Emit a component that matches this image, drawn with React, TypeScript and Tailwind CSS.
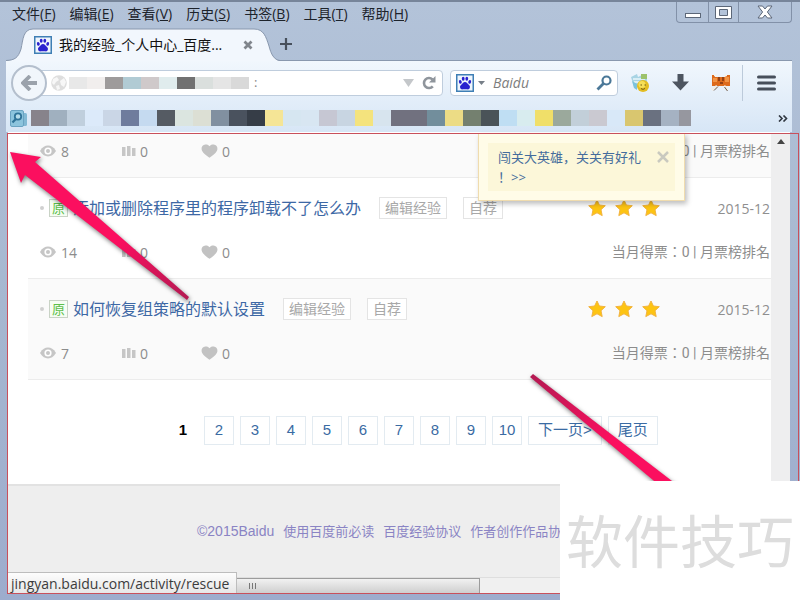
const menus = [
  ["文件", "F"],
  ["编辑", "E"],
  ["查看", "V"],
  ["历史", "S"],
  ["书签", "B"],
  ["工具", "T"],
  ["帮助", "H"],
];

const urlBlocks = [
  "bg-[#e8e8e8]",
  "bg-[#f1eeed]",
  "bg-[#9e9b9b]",
  "bg-[#b1cbd4]",
  "bg-[#cfc9ca]",
  "bg-[#e0eced]",
  "bg-[#717171]",
  "bg-[#dadfdd]",
  "bg-[#e5e5e5]",
  "bg-[#d9d9d9]",
];

const bookmarkBlocks = [
  "bg-[#87838b]",
  "bg-[#a0b0bf]",
  "bg-[#c0cfdd]",
  "bg-[#dceafa]",
  "bg-[#cad6e6]",
  "bg-[#6f7c9d]",
  "bg-[#c5daf0]",
  "bg-[#555b63]",
  "bg-[#dbe5e0]",
  "bg-[#dcdfd4]",
  "bg-[#8190a0]",
  "bg-[#4a525e]",
  "bg-[#363d47]",
  "bg-[#f5e596]",
  "bg-[#d6e6f1]",
  "bg-[#d8e6f2]",
  "bg-[#c6c7d3]",
  "bg-[#c8d5e2]",
  "bg-[#f4e37d]",
  "bg-[#d7e4ee]",
  "bg-[#71717f]",
  "bg-[#71717f]",
  "bg-[#728e9c]",
  "bg-[#ecdc85]",
  "bg-[#74806f]",
  "bg-[#4a5358]",
  "bg-[#bfdef3]",
  "bg-[#d8ecef]",
  "bg-[#f0df69]",
  "bg-[#9ba99c]",
  "bg-[#c2cfd9]",
  "bg-[#cac9d1]",
  "bg-[#d8e8f8]",
  "bg-[#d9c66f]",
  "bg-[#6a7180]",
  "bg-[#a5b2c2]",
  "bg-[#96979f]",
];

type Entry = {
  title?: string;
  views: number;
  shaded?: boolean;
};

const entries: Entry[] = [
  { views: 8, shaded: true },
  { title: "添加或删除程序里的程序卸载不了怎么办", views: 14 },
  { title: "如何恢复组策略的默认设置", views: 7, shaded: true },
];

const PawIcon = () => (
  <svg viewBox="0 0 18 18" className="size-[18px] shrink-0">
    <rect x="0.75" y="0.75" width="16.5" height="16.5" fill="#eef5fc" stroke="#3f7fb5" strokeWidth="1.5" />
    <g fill="#2a22cf">
      <ellipse cx="4.3" cy="7.8" rx="1.4" ry="1.9" transform="rotate(-15 4.3 7.8)" />
      <ellipse cx="7.2" cy="4.8" rx="1.4" ry="2" />
      <ellipse cx="10.8" cy="4.8" rx="1.4" ry="2" />
      <ellipse cx="13.7" cy="7.8" rx="1.4" ry="1.9" transform="rotate(15 13.7 7.8)" />
      <path d="M9 8c1.6 0 2.2 1.4 3.2 2.3 1.2 1 2 1.8 1.7 3.3-.3 1.6-1.6 2-3 1.7-1.3-.2-2.5-.2-3.8 0-1.4.3-2.7-.1-3-1.7-.3-1.5.5-2.3 1.7-3.3C6.8 9.4 7.4 8 9 8z" />
    </g>
  </svg>
);

const EyeIcon = () => (
  <svg viewBox="0 0 16 12" className="h-3 w-4">
    <path d="M0 6C2.5 2 5 .6 8 .6S13.5 2 16 6c-2.5 4-5 5.4-8 5.4S2.5 10 0 6z" fill="#c6c6c6" />
    <circle cx="8" cy="6" r="3.6" fill="#fff" />
    <circle cx="8" cy="6" r="2" fill="#c6c6c6" />
  </svg>
);

const BarsIcon = () => (
  <svg viewBox="0 0 14 10" className="h-[10px] w-[14px]">
    <path d="M0 1h3.5v9H0zM5 0h3.5v10H5zM10 2h3.5v8H10z" fill="#c6c6c6" />
  </svg>
);

const HeartIcon = () => (
  <svg viewBox="0 0 17 14" className="h-[14px] w-[17px]">
    <path
      d="M8.5 2.2C9.6.7 11 .3 12.6.5c2.6.3 4.2 2.4 3.8 4.8-.5 3.2-4.2 6-7.9 8.500C4.800 11.300 1.100 8.500.6 5.300.2 2.900 1.800.8 4.400.5 6 .3 7.400.7 8.500 2.200z"
      fill="#c2c2c2"
    />
  </svg>
);

const StarIcon = () => (
  <svg viewBox="0 0 18 18" className="size-[18px]">
    <path
      d="M9 1l2.400 5 5.900.7-4.300 4 1.200 5.900L9 13.800l-5.200 2.800 1.200-5.900-4.300-4L6.600 6z"
      fill="#fdc412"
      stroke="#f2b340"
      strokeWidth="1"
      strokeLinejoin="round"
    />
  </svg>
);

function TitleBar() {
  return (
    <header className="flex h-[25px] justify-between">
      <nav className="flex items-center gap-[14px] pb-[2px] pl-3 text-[14px] leading-none text-[#1d232b]">
        {menus.map(([label, key]) => (
          <button key={key} className="whitespace-nowrap">
            {label}(<u>{key}</u>)
          </button>
        ))}
      </nav>
      <div className="mr-2 flex h-[21px] shrink-0 divide-x divide-[#8291a8] rounded-b border border-t-0 border-[#8291a8]">
        <button aria-label="最小化" className="flex w-8 items-end justify-center pb-1">
          <svg viewBox="0 0 16 5" className="h-[5px] w-4">
            <rect x="0.5" y="0.5" width="15" height="4" fill="#fff" stroke="#5c6778" />
          </svg>
        </button>
        <button aria-label="最大化" className="flex w-[30px] items-center justify-center">
          <svg viewBox="0 0 17 13" className="h-[13px] w-[17px]">
            <path
              d="M.5.5h16v12H.5zM4.500 3.500v6h8v-6z"
              fill="#fff"
              fillRule="evenodd"
              stroke="#5c6778"
            />
          </svg>
        </button>
        <button aria-label="关闭" className="flex w-[52px] items-center justify-center">
          <svg viewBox="0 0 16 14" className="h-[14px] w-4">
            <path
              d="M1 1h4.500L8 4l2.500-3H15l-4.600 6L15 13h-4.500L8 10l-2.500 3H1l4.600-6z"
              fill="#fff"
              stroke="#5c6778"
            />
          </svg>
        </button>
      </div>
    </header>
  );
}

function TabStrip() {
  return (
    <div className="relative z-10 flex h-[33px] pl-[6px]">
      <div className="relative w-[274px] shrink-0">
        {/* One pixel taller than the strip, so the active tab runs into the toolbar */}
        <svg viewBox="0 0 274 34" className="absolute inset-x-0 top-0 h-[34px] w-full">
          <path
            d="M0 34C9 33 12 31 15 22C17 13 17 2 27 2H248C258 2 260 10 263 19C265 27 268 33 274 34z"
            fill="#f2f7fd"
          />
          <path
            d="M0 33.500C9 33 12 31 15 22C17 13 17 2 27 2H248C258 2 260 10 263 19C265 27 268 33 274 33.500"
            fill="none"
            stroke="#8998ae"
          />
        </svg>
        <div className="relative flex h-full items-center pl-7 pt-[2px]">
          <PawIcon />
          <span className="ml-[7px] flex-1 whitespace-nowrap text-[14px] text-[#111]">
            我的经验_个人中心_百度...
          </span>
          <button aria-label="关闭标签页" className="mr-[27px]">
            <svg viewBox="0 0 10 10" className="size-[10px]">
              <path d="M1.500 1.500l7 7M8.500 1.500l-7 7" stroke="#80858c" strokeWidth="2.800" />
            </svg>
          </button>
        </div>
      </div>
      <button aria-label="新建标签页" className="flex items-center">
        <svg viewBox="0 0 12 12" className="size-3">
          <path d="M6 0v12M0 6h12" stroke="#47505c" strokeWidth="2.200" />
        </svg>
      </button>
    </div>
  );
}

function NavBar() {
  return (
    <div className="flex h-[43px] items-center pl-[5px]">
      <button
        aria-label="后退"
        className="z-10 flex size-9 shrink-0 items-center justify-center rounded-full border-2 border-[#b4bfcd] bg-[#f1f6fb]"
      >
        <svg viewBox="0 0 16 16" className="size-4">
          <path d="M9 1L2 8l7 7M2.500 8H16" fill="none" stroke="#9ba2ab" strokeWidth="3.800" />
        </svg>
      </button>
      <div className="-ml-2 flex h-[26px] min-w-0 flex-1 items-center rounded-r-sm border border-[#bfcddd] bg-white pl-[11px] pr-[6px]">
        <svg viewBox="0 0 16 16" className="size-4 shrink-0">
          <circle cx="8" cy="8" r="7.800" fill="#dedede" />
          <path d="M2 4l4-2 2 3-3 2-2 3-2-2zM9 6l4-3 2 4-2 5-3-2zM5 11l3-1 1 4-3 1z" fill="#f7f7f7" />
        </svg>
        <div className="ml-[2px] flex shrink-0">
          {urlBlocks.map((color, i) => (
            <span key={i} className={`h-3 w-[18px] ${color}`} />
          ))}
        </div>
        <input
          aria-label="网址"
          defaultValue=":"
          className="ml-[5px] min-w-0 flex-1 bg-transparent text-[13px] text-[#888] outline-none"
        />
        <button aria-label="历史记录" className="shrink-0">
          <svg viewBox="0 0 11 8" className="h-2 w-[11px]">
            <path d="M0 0h11L5.500 8z" fill="#c4c7ca" />
          </svg>
        </button>
        <button aria-label="刷新" className="ml-2 shrink-0">
          <svg viewBox="0 0 14 14" className="size-[14px]">
            <path d="M10.800 10.300A5 5 0 1 1 10.500 3.500" fill="none" stroke="#8f959c" strokeWidth="2.600" />
            <path d="M13.500 0v6.500H7z" fill="#8f959c" />
          </svg>
        </button>
      </div>
      <div className="ml-[7px] flex h-[26px] w-[168px] shrink-0 items-center rounded-sm border border-[#bfcddd] bg-white px-[5px]">
        <PawIcon />
        <svg viewBox="0 0 7 4" className="ml-1 h-1 w-[7px] shrink-0">
          <path d="M0 0h7L3.500 4z" fill="#777f88" />
        </svg>
        <input
          aria-label="搜索"
          placeholder="Baidu"
          className="ml-2 min-w-0 flex-1 bg-transparent text-[14px] italic outline-none placeholder:text-[#7d7d7d]"
        />
        <button aria-label="搜索" className="shrink-0">
          <svg viewBox="0 0 16 16" className="size-4">
            <circle cx="10.500" cy="5.500" r="4" fill="none" stroke="#4b7898" strokeWidth="2.200" />
            <path d="M7.500 8.500L1.500 14.500" stroke="#4b7898" strokeWidth="2.800" />
          </svg>
        </button>
      </div>
      <button aria-label="扩展" className="ml-3 shrink-0">
        <svg viewBox="0 0 20 20" className="size-5">
          <path d="M1 4l6-3 1 3 6-3 3 1v12H4z" fill="#a8d4e4" />
          <path d="M3 6h12M4 9h8" stroke="#e9f6fa" strokeWidth="1.500" />
          <path d="M11 1h6v5h-6z" fill="#9cc26b" />
          <path d="M2 8l5 3v6l-3-2z" fill="#7cc3dc" />
          <circle cx="13" cy="13" r="6" fill="#e3bd22" />
          <circle cx="12" cy="11.500" r="3.500" fill="#f6df57" />
          <path d="M10.500 12h1.500M14.500 12H16M11 15.500c1.500 1.200 3 1 4-.3" stroke="#6f5a12" fill="none" />
        </svg>
      </button>
      <button aria-label="下载" className="ml-[22px] shrink-0">
        <svg viewBox="0 0 17 17" className="size-[17px]">
          <path d="M5.500 0h6v7.500H17L8.500 16.500 0 7.500h5.500z" fill="#4d5560" />
        </svg>
      </button>
      <button aria-label="助手" className="ml-[22px] shrink-0">
        <svg viewBox="0 0 20 18" className="h-[18px] w-5">
          <path d="M1 1h3v2h10l2-2h3v11H1z" fill="#dd6a1b" />
          <path d="M2 4h4v4H2zM14 3h4v5h-4z" fill="#f29445" />
          <path d="M8 3v4M12 3v4M9 9h3" stroke="#7d3410" strokeWidth="1.500" />
          <path d="M3 1.500h3M13 1.500h3" stroke="#f7f2ea" strokeWidth="1.500" />
          <path d="M6 12l-5 4M13 12l4 4" stroke="#f3efe6" strokeWidth="2.500" fill="none" />
          <path d="M3 16.500l4-4M13.500 13l3 4" stroke="#6b5a4e" strokeWidth="1" />
        </svg>
      </button>
      <div className="ml-[11px] h-9 w-px shrink-0 bg-[#bccada]" />
      <button aria-label="菜单" className="ml-[14px] mr-4 shrink-0">
        <svg viewBox="0 0 19 16" className="h-4 w-[19px]">
          <path d="M1.500 2h16M1.500 8h16M1.500 14h16" stroke="#474f5b" strokeWidth="3" strokeLinecap="round" />
        </svg>
      </button>
    </div>
  );
}

function BookmarksBar() {
  return (
    <div className="flex h-7 items-center pl-1 pr-1">
      <svg viewBox="0 0 17 17" className="size-[17px] shrink-0">
        <rect x="5" y="3" width="12" height="13" rx="1.500" fill="#82b9d4" />
        <rect x="0.500" y="0.500" width="13" height="16" rx="1.500" fill="#8cc4dd" stroke="#6aa3c2" />
        <circle cx="8" cy="6.500" r="3.200" fill="#b5dcea" stroke="#2f7398" strokeWidth="1.800" />
        <path d="M5.800 9L2.500 12.500" stroke="#2f7398" strokeWidth="2.200" />
      </svg>
      <div className="ml-1 flex min-w-0 flex-1 overflow-hidden">
        {bookmarkBlocks.map((color, i) => (
          <span key={i} className={`h-4 w-[18px] shrink-0 last:w-3 ${color}`} />
        ))}
      </div>
      <button aria-label="更多书签" className="shrink-0">
        <svg viewBox="0 0 10 7" className="h-[7px] w-[10px]">
          <path d="M1 .5l3 3-3 3M5.500.5l3 3-3 3" fill="none" stroke="#2f3640" strokeWidth="1.600" />
        </svg>
      </button>
    </div>
  );
}

function EntryRow({ title, views, shaded }: Entry) {
  return (
    <li
      className={`border-b border-[#ececec] pb-3 pl-3 pr-px ${shaded ? "bg-[#fafafa]" : "bg-white"} ${
        title ? "" : "pt-1"
      }`}
    >
      {title && (
        <div className="flex h-[60px] items-center">
          <span className="size-1 shrink-0 rounded-full bg-[#d0d0d0]" />
          <span className="ml-[5px] flex h-[18px] w-[19px] shrink-0 items-center justify-center border border-[#c9d3c6] bg-[#f6fdf3] text-[13px] leading-none text-[#5cbf4a]">
            原
          </span>
          <a href="#" className="ml-[5px] whitespace-nowrap text-[16px] text-[#3d68a5]">
            {title}
          </a>
          <button className="ml-[18px] h-[22px] shrink-0 border border-[#e4e4e4] bg-white px-[5px] text-[14px] leading-5 text-[#a8a8a8]">
            编辑经验
          </button>
          <button className="ml-4 h-[22px] shrink-0 border border-[#e4e4e4] bg-white px-[5px] text-[14px] leading-5 text-[#a8a8a8]">
            自荐
          </button>
          <div className="ml-auto flex shrink-0 gap-[9px]">
            <StarIcon />
            <StarIcon />
            <StarIcon />
          </div>
          <span className="ml-[57px] text-[14px] text-[#8f8f8f]">2015-12</span>
        </div>
      )}
      <div className="flex h-7 items-center text-[14px] text-[#8c8c8c]">
        <span className="flex w-[82px] items-center gap-[5px]">
          <EyeIcon />
          {views}
        </span>
        <span className="flex w-[79px] items-center gap-1">
          <BarsIcon />0
        </span>
        <span className="flex items-center gap-1">
          <HeartIcon />0
        </span>
        <span className="ml-auto whitespace-nowrap font-['Roboto','Noto_Sans_CJK_TC',sans-serif]">
          当月得票：0 | 月票榜排名
        </span>
      </div>
    </li>
  );
}

function Pagination() {
  return (
    <nav className="flex items-center gap-[6px] pb-[39px] pl-[160px] pt-9 font-['Liberation_Sans','Noto_Sans_CJK_SC',sans-serif] text-[15px] text-[#3a6ba3]">
      <span className="w-[30px] text-center font-bold text-black">1</span>
      {[2, 3, 4, 5, 6, 7, 8, 9, 10].map((page) => (
        <a
          key={page}
          href="#"
          className="flex h-[29px] w-[30px] items-center justify-center border border-[#e3ebf1]"
        >
          {page}
        </a>
      ))}
      <a
        href="#"
        className="flex h-[29px] items-center whitespace-nowrap border border-[#e3ebf1] px-[9px]"
      >
        下一页&gt;
      </a>
      <a
        href="#"
        className="flex h-[29px] items-center whitespace-nowrap border border-[#e3ebf1] px-[9px]"
      >
        尾页
      </a>
    </nav>
  );
}

function Notice() {
  return (
    <aside className="absolute right-[105px] top-px w-[207px] border border-[#f0dcae] bg-[#fffce8] p-[9px] shadow-[2px_3px_5px_rgba(0,0,0,0.25)]">
      <div className="flex items-start justify-between bg-[#fcf7d9] py-1 pl-[10px] pr-[6px]">
        <a href="#" className="whitespace-nowrap text-[13px] leading-5 text-[#446c9c]">
          闯关大英雄，关关有好礼
          <br />！&gt;&gt;
        </a>
        <button aria-label="关闭提示" className="pt-1">
          <svg viewBox="0 0 12 12" className="size-3">
            <path d="M1 1l10 10M11 1L1 11" stroke="#c9c9bf" strokeWidth="2.500" />
          </svg>
        </button>
      </div>
    </aside>
  );
}

function PageFooter() {
  return (
    <footer className="flex flex-1 items-center gap-[9px] whitespace-nowrap border-t-2 border-[#e2e2e2] bg-[#eeeeee] pl-[189px] font-['Liberation_Sans','Noto_Sans_CJK_SC',sans-serif] text-[14px] text-[#8a84c4]">
      <span>©2015Baidu</span>
      {["使用百度前必读", "百度经验协议", "作者创作作品协议"].map((text) => (
        <a key={text} href="#" className="text-[13px]">
          {text}
        </a>
      ))}
    </footer>
  );
}

export default function App() {
  return (
    <div className="relative flex min-h-screen flex-col overflow-hidden border-t-2 border-[#77859a] bg-linear-to-b from-[#b3c3d9] via-[#a6b7d0] to-[#9daccd] font-['Open_Sans','Noto_Sans_CJK_SC',sans-serif]">
      <TitleBar />
      <TabStrip />
      <div className="ml-[6px] mr-2 border-t border-[#8998ae] bg-linear-to-b from-[#f1f7fd] to-[#d7e6f6]">
        <NavBar />
        <BookmarksBar />
      </div>

      <main className="relative ml-2 mr-[10px] flex flex-1 bg-white pt-[1px]">
        <div className="flex min-w-0 flex-1 flex-col overflow-hidden">
          <ul className="pl-5">
            {entries.map((entry) => (
              <EntryRow key={entry.views} {...entry} />
            ))}
          </ul>
          <Pagination />
          <PageFooter />
          {/* Horizontal scrollbar */}
          <div className="h-[17px] border-t border-[#dedede] bg-[#f0f0f0] pl-[17px]">
            <div className="flex h-full w-[455px] items-center justify-center border border-[#9c9c9c] bg-linear-to-b from-[#f1f1f1] to-[#cfcfcf]">
              <span className="h-[6px] w-[7px] border-x border-[#777]">
                <span className="mx-auto block h-full w-px bg-[#777]" />
              </span>
            </div>
          </div>
        </div>

        {/* Vertical scrollbar */}
        <div className="flex w-[19px] shrink-0 justify-center bg-[#eeeeef] pt-[6px]">
          <svg viewBox="0 0 8 5" className="h-[5px] w-2">
            <path d="M4 0l4 5H0z" fill="#444" />
          </svg>
        </div>

        <Notice />
        <div className="absolute bottom-0 left-0 border border-b-0 border-l-0 border-[#bdbdbd] bg-linear-to-b from-[#fdfdfd] to-[#e6e6e6] pl-[3px] pr-[7px] text-[14px] leading-[21px] text-[#3c3c3c]">
          jingyan.baidu.com/activity/rescue
        </div>
      </main>
      <div className="h-[6px] shrink-0" />

      {/* Marked region and the arrows that point at its corners */}
      <div className="pointer-events-none absolute bottom-[6px] left-[7px] right-[1px] top-[131px] border border-[#c8505c]" />
      <svg
        viewBox="0 0 800 600"
        className="pointer-events-none absolute -top-[2px] left-0 h-[600px] w-[800px] drop-shadow-[1px_2px_2px_rgba(0,0,0,0.5)]"
      >
        <defs>
          <linearGradient id="head" x1="0" y1="0" x2="1" y2="1">
            <stop offset="0.6" stopColor="#fb0f5f" />
            <stop offset="1" stopColor="#b31a52" />
          </linearGradient>
          <linearGradient id="tail" x1="0" y1="0" x2="1" y2="1">
            <stop offset="0" stopColor="#b31a52" />
            <stop offset="0.5" stopColor="#fb0f5f" />
          </linearGradient>
        </defs>
        <path d="M10 152L41 157L35 162L189 297L187 300L25 175L21 183z" fill="url(#head)" />
        <path d="M530 377L533 374L698 501L678 501z" fill="url(#tail)" />
      </svg>

      <div className="absolute bottom-0 right-0 flex h-[119px] w-[240px] items-center justify-center whitespace-nowrap bg-white pb-1 font-['Noto_Sans_CJK_SC',sans-serif] text-[57px] leading-none text-[#dddddd]">
        软件技巧
      </div>
    </div>
  );
}
